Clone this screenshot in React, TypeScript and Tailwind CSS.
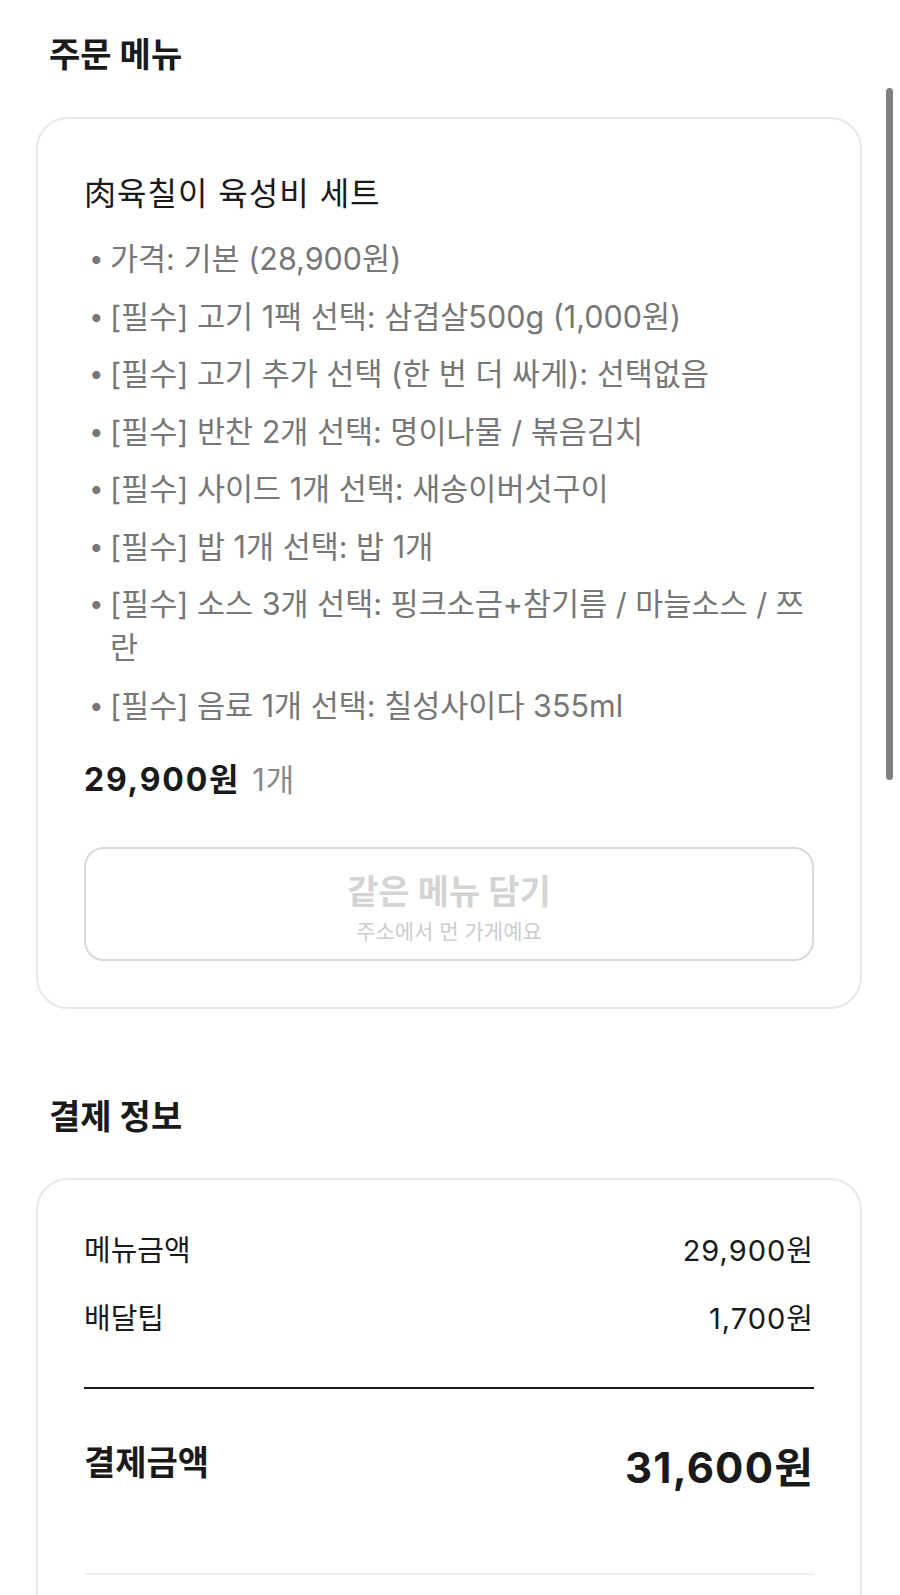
const font = { fontFamily: '"Inter", "Noto Sans CJK KR", sans-serif' };

const options = [
  '가격: 기본 (28,900원)',
  '[필수] 고기 1팩 선택: 삼겹살500g (1,000원)',
  '[필수] 고기 추가 선택 (한 번 더 싸게): 선택없음',
  '[필수] 반찬 2개 선택: 명이나물 / 볶음김치',
  '[필수] 사이드 1개 선택: 새송이버섯구이',
  '[필수] 밥 1개 선택: 밥 1개',
  '[필수] 소스 3개 선택: 핑크소금+참기름 / 마늘소스 / 쯔란',
  '[필수] 음료 1개 선택: 칠성사이다 355ml',
];

function OrderCard() {
  return (
    <div className="rounded-[32px] border-2 border-[#e8e8e8] px-[46px] pt-[53px] pb-[46px]">
      <div className="text-[32px] leading-[44px] tracking-[1px] text-[#1a1a1a]">肉육칠이 육성비 세트</div>
      <ul className="mt-[21px] flex flex-col gap-[13.5px]">
        {options.map((o) => (
          <li key={o} className="flex text-[30.5px] leading-[44px] text-[#777777]">
            <span className="w-[26px] shrink-0 pl-[5px] text-[26px]">•</span>
            <span>{o}</span>
          </li>
        ))}
      </ul>
      <div className="mt-[30px] flex items-baseline gap-[12px]">
        <span className="text-[32px] font-bold leading-[44px] tracking-[1.8px] text-[#1a1a1a]">29,900원</span>
        <span className="text-[31px] leading-[44px] tracking-[1px] text-[#8a8a8a]">1개</span>
      </div>
      <button className="mt-[45px] flex h-[114px] w-full flex-col items-center rounded-[20px] border-2 border-[#d9d9d9] bg-white pt-[22px]">
        <span className="text-[34px] font-bold leading-[42px] text-[#d4d4d4]">같은 메뉴 담기</span>
        <span className="mt-[6px] text-[21px] leading-[26px] text-[#cdcdcd]">주소에서 먼 가게예요</span>
      </button>
    </div>
  );
}

function PaymentCard() {
  return (
    <div className="rounded-t-[32px] border-x-2 border-t-2 border-[#e8e8e8] px-[46px] pt-[51px] pb-[120px]">
      <div className="flex flex-col gap-[28px]">
        <div className="flex justify-between text-[29px] leading-[40px] text-[#1a1a1a]">
          <span>메뉴금액</span>
          <span className="tracking-[1px]">29,900원</span>
        </div>
        <div className="flex justify-between text-[29px] leading-[40px] text-[#1a1a1a]">
          <span>배달팁</span>
          <span className="tracking-[1px]">1,700원</span>
        </div>
      </div>
      <div className="mt-[48px] h-[2px] bg-[#1a1a1a]" />
      <div className="mt-[52px] flex items-start justify-between">
        <span className="text-[34px] font-bold leading-[44px] text-[#1a1a1a]">결제금액</span>
        <span className="text-[42px] font-bold leading-[54px] tracking-[1.2px] text-[#1a1a1a]">31,600원</span>
      </div>
      <div className="mt-[78px] h-[2px] bg-[#f0f0f0]" />
    </div>
  );
}

export default function App() {
  return (
    <div className="relative h-[1595px] overflow-hidden bg-white" style={font}>
      <div className="pl-[36px] pr-[38px]">
        <h2 className="pl-[13px] pt-[33px] text-[34px] font-bold leading-[44px] text-[#1a1a1a]">주문 메뉴</h2>
        <div className="mt-[40px]">
          <OrderCard />
        </div>
        <h2 className="mt-[86px] pl-[13px] text-[34px] font-bold leading-[44px] text-[#1a1a1a]">결제 정보</h2>
        <div className="mt-[39px]">
          <PaymentCard />
        </div>
      </div>
      <div className="absolute left-[886px] top-[88px] h-[692px] w-[7px] rounded-full bg-[#808080]" />
    </div>
  );
}
